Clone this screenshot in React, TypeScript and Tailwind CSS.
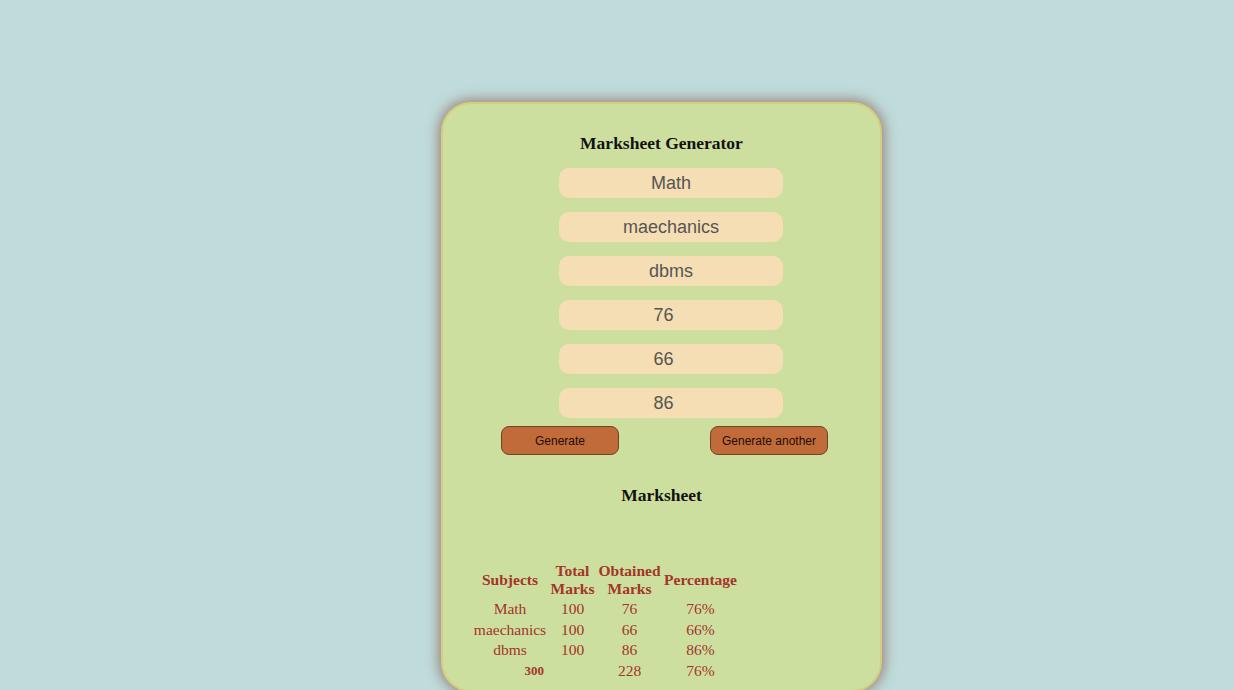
import React from 'react';

const subjects = ['Math', 'maechanics', 'dbms'];
const marks = ['76', '66', '86'];

const rows = [
  { subject: 'Math', total: '100', obtained: '76', pct: '76%' },
  { subject: 'maechanics', total: '100', obtained: '66', pct: '66%' },
  { subject: 'dbms', total: '100', obtained: '86', pct: '86%' },
];

const serif = { fontFamily: '"Liberation Serif", "Times New Roman", serif' };
const sans = { fontFamily: '"Liberation Sans", Arial, sans-serif' };

function Field({ value, type }: { value: string; type: 'text' | 'number' }) {
  return (
    <input
      type={type}
      defaultValue={value}
      style={sans}
      className="ml-[19px] h-[30px] w-[224px] rounded-[10px] border-0 bg-[#f5deb3] text-center text-[18px] text-[#555555] outline-none"
    />
  );
}

function Button({ label }: { label: string }) {
  return (
    <button
      style={sans}
      className="h-[29px] w-[118px] rounded-[8px] border-[1.5px] border-[#6e4526] bg-[#c26b3a] text-[12px] text-[#1f0d05]"
    >
      {label}
    </button>
  );
}

export default function App() {
  return (
    <div className="min-h-[690px] overflow-hidden bg-[#bfdbdb] pt-[102px]">
      <div className="ml-[441px] flex h-[590px] w-[441px] flex-col items-center rounded-[30px] border-2 border-[#d6cc7c] bg-[#cddf9f] pt-[29px] shadow-[0_0_12px_3px_rgba(140,105,90,0.7)]">
        <h1 style={serif} className="text-[17.5px] leading-[20px] font-bold text-[#111]">
          Marksheet Generator
        </h1>

        <div className="mt-[15px] flex flex-col gap-[14px]">
          {subjects.map((s) => (
            <Field key={s} value={s} type="text" />
          ))}
          {marks.map((m) => (
            <Field key={m} value={m} type="number" />
          ))}
        </div>

        <div className="mt-[8px] flex w-full justify-between pl-[58px] pr-[52px]">
          <Button label="Generate" />
          <Button label="Generate another" />
        </div>

        <h2 style={serif} className="mt-[30px] text-[17.5px] leading-[20px] font-bold text-[#111]">
          Marksheet
        </h2>

        <div className="mt-[56px] w-full pl-[29px]">
          <table style={serif} className="text-[15.5px] text-[#a3352a]">
            <thead>
              <tr className="leading-[18px]">
                <th className="w-[76px] py-[1px] text-center">Subjects</th>
                <th className="w-[49px] py-[1px] text-center">
                  Total
                  <br />
                  Marks
                </th>
                <th className="w-[65px] py-[1px] text-center">
                  Obtained
                  <br />
                  Marks
                </th>
                <th className="w-[77px] py-[1px] text-center">Percentage</th>
              </tr>
            </thead>
            <tbody>
              {rows.map((r) => (
                <tr key={r.subject} className="leading-[18.5px]">
                  <td className="py-[1px] text-center">{r.subject}</td>
                  <td className="py-[1px] text-center">{r.total}</td>
                  <td className="py-[1px] text-center">{r.obtained}</td>
                  <td className="py-[1px] text-center">{r.pct}</td>
                </tr>
              ))}
              <tr className="leading-[18.5px]">
                <td className="py-[1px] pr-[4px] text-right text-[13px] font-bold">300</td>
                <td className="py-[1px]"></td>
                <td className="py-[1px] text-center">228</td>
                <td className="py-[1px] text-center">76%</td>
              </tr>
            </tbody>
          </table>
        </div>
      </div>
    </div>
  );
}
